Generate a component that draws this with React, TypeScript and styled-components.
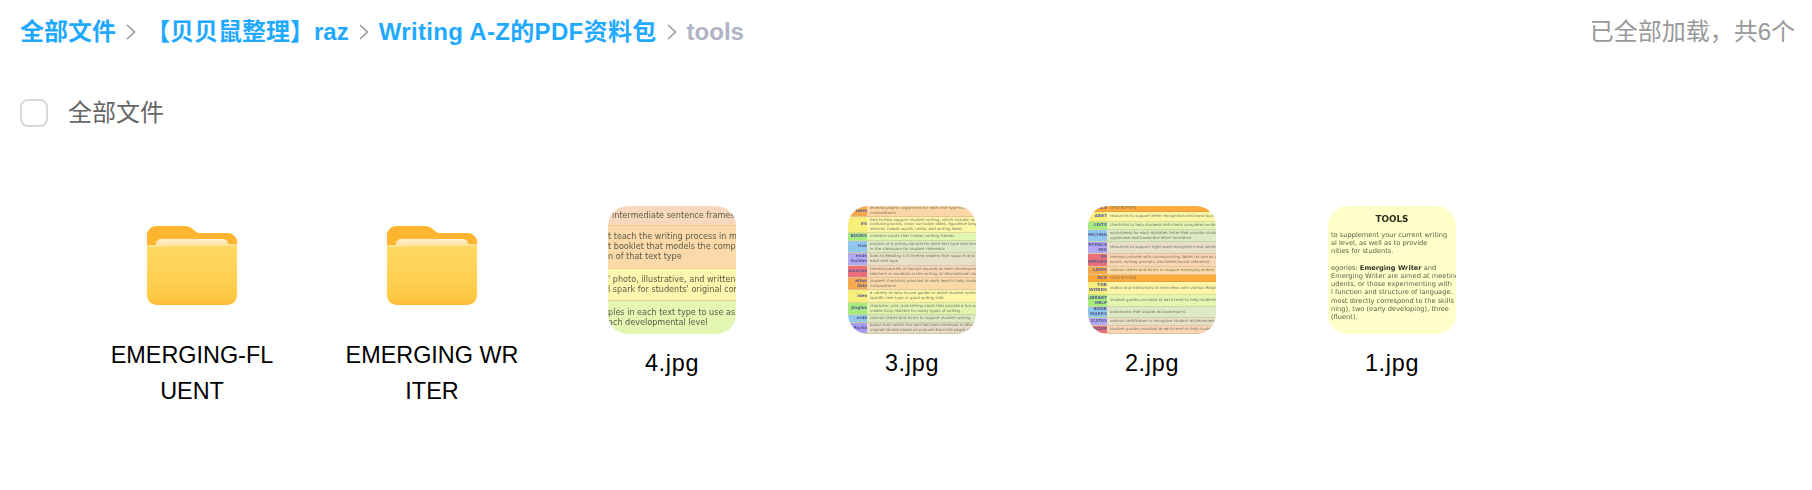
import styled, { createGlobalStyle } from "styled-components";

const cjk = `"Noto Sans CJK SC", "Noto Sans", sans-serif`;

const GlobalStyle = createGlobalStyle`
  body {
    margin: 0;
    background: #fff;
    font-family: "Liberation Sans", ${cjk};
  }
`;

type TableRow = {
  h: number;
  label: string;
  labelBg: string;
  bg: string;
  text: string[];
};

const table3: TableRow[] = [
  { h: 11, label: "izers", labelBg: "#f5a94e", bg: "#fcd6a6", text: ["leveled graphic organizers for each text type to help students plan", "compositions"] },
  { h: 16, label: "ES", labelBg: "#f6f07a", bg: "#fcf6a8", text: ["lists to help support student writing, which include: adjectives, adver", "confusing words, cross-curricular ideas, figurative language, glossary", "devices, transit words, verbs, and writing ideas"] },
  { h: 8, label: "BOOKS", labelBg: "#a6ec7c", bg: "#e2f5b2", text: ["Initiation books that contain writing frames"] },
  { h: 12, label: "tion", labelBg: "#8fc8ec", bg: "#dde8c6", text: ["posters of a writing sample for each text type and level to enlarge an", "in the classroom for student reference"] },
  { h: 13, label: "ends Guides", labelBg: "#b3a9f2", bg: "#e7dfc8", text: ["links to Reading A-Z leveled readers that support and provide example", "each text type"] },
  { h: 12, label: "sources", labelBg: "#ea6f78", bg: "#fad5b6", text: ["themed packets of sample sources at each developmental level for us", "teachers or students in the writing of informational reports"] },
  { h: 12, label: "ation lists", labelBg: "#f5a94e", bg: "#fcd9a8", text: ["student checklists provided at each level to help students revise their", "compositions"] },
  { h: 13, label: "ides", labelBg: "#f6f07a", bg: "#fcf6a8", text: ["a variety of easy-to-use guides to assist student writing according to", "specific text type or good writing trait"] },
  { h: 12, label: "Jingles", labelBg: "#a6ec7c", bg: "#e0f4b0", text: ["character, plot, and setting cards that provide a fun way for students", "create story starters for many types of writing"] },
  { h: 8, label: "ards", labelBg: "#8fc8ec", bg: "#dce8c4", text: ["various charts and forms to support student writing"] },
  { h: 11, label: "Packs", labelBg: "#a79df0", bg: "#e6dcc8", text: ["books from which the text has been removed to allow students to", "original stories based on pictures from the pages of an actual book"] },
];

const table2: TableRow[] = [
  { h: 6, label: "RCE", labelBg: "#ffa733", bg: "#ffab3c", text: ["DESCRIPTION"] },
  { h: 10, label: "ABET", labelBg: "#f6f07a", bg: "#fcf6a8", text: ["resources to support letter recognition and word building"] },
  { h: 8, label: "LISTS", labelBg: "#a6ec7c", bg: "#e2f5b2", text: ["checklists to help students self-check completed writing"] },
  { h: 12, label: "WRITING", labelBg: "#8fc8ec", bg: "#dde8c6", text: ["worksheets for each alphabet letter that provide students with practi", "uppercase and lowercase letter formation"] },
  { h: 12, label: "SENTENCE ING", labelBg: "#b3a9f2", bg: "#e7dfc8", text: ["resources to support sight word recognition and sentence building"] },
  { h: 13, label: "OF SUPPLIES", labelBg: "#ea6f78", bg: "#fad5b6", text: ["themed pictures with corresponding labels for use as writing practice", "words, writing prompts, and letter/sound reference"] },
  { h: 8, label: "LATES", labelBg: "#f5a94e", bg: "#fcd9a8", text: ["various charts and forms to support emerging writers"] },
  { h: 7, label: "RCE", labelBg: "#ffa733", bg: "#ffab3c", text: ["DESCRIPTION"] },
  { h: 13, label: "TOR WORDS", labelBg: "#f6f07a", bg: "#fcf6a8", text: ["videos and transcripts of interviews with various Reading A-Z authors"] },
  { h: 12, label: "LIBRARY HELP", labelBg: "#a6ec7c", bg: "#e2f5b2", text: ["student guides provided at each level to help students write a biograph"] },
  { h: 11, label: "BOOK MARKS", labelBg: "#8fc8ec", bg: "#dde8c6", text: ["bookmarks that double as bookreports"] },
  { h: 8, label: "ICATES", labelBg: "#b3a9f2", bg: "#e7dfc8", text: ["various certificates to recognize student achievement in writing"] },
  { h: 8, label: "GROUP", labelBg: "#ea6f78", bg: "#fad5b6", text: ["student guides provided at each level to help students self-edit their"] },
];

const bands = [
  { h: 20, bg: "#f8d8bc", inset: 4, lines: ["intermediate sentence frames"] },
  { h: 43, bg: "#fbd9a9", inset: -3, lines: ["t teach the writing process in more", "t booklet that models the composition", "n of that text type"] },
  { h: 32, bg: "#fcf7ae", inset: -1, lines: ["' photo, illustrative, and written prompts", "l spark for students' original compositions"] },
  { h: 33, bg: "#e3f6b2", inset: -3, lines: ["ples in each text type to use as", "ach developmental level"] },
];

const Page = styled.div`
  width: 1812px;
  height: 490px;
  overflow: hidden;
  background: #fff;
`;

const TopBar = styled.header`
  display: flex;
  justify-content: space-between;
  align-items: center;
  height: 34px;
  padding: 15px 17px 0 20px;
`;

const Crumbs = styled.nav`
  display: flex;
  align-items: center;
`;

const Crumb = styled.span`
  font-family: "Liberation Sans", ${cjk};
  font-size: 24px;
  font-weight: 700;
  line-height: 34px;
  white-space: nowrap;
  color: #1fa9ff;
`;

const WideCrumb = styled(Crumb)`
  letter-spacing: 0.33px;
`;

const CurrentCrumb = styled(Crumb)`
  color: #b1b4c4;
`;

const Chevron = styled.svg`
  flex: none;
  width: 12px;
  height: 18px;
  margin: 0 9px 0 9px;
`;

const LoadedNote = styled.span`
  font-family: "Liberation Sans", ${cjk};
  font-size: 24px;
  color: #999;
  line-height: 34px;
  white-space: nowrap;
`;

const SelectRow = styled.label`
  display: flex;
  align-items: center;
  gap: 20px;
  margin: 47px 0 0 20px;
  height: 30px;
`;

const CheckBox = styled.span`
  box-sizing: border-box;
  width: 28px;
  height: 28px;
  margin-top: 3px;
  border: 2px solid #d9d9d9;
  border-radius: 8px;
  background: #fff;
`;

const SelectLabel = styled.span`
  font-family: ${cjk};
  font-size: 24px;
  color: #666;
  line-height: 30px;
`;

const Grid = styled.main`
  display: grid;
  grid-template-columns: repeat(6, 240px);
  margin: 80px 0 0 72px;
`;

const Item = styled.div`
  display: flex;
  flex-direction: column;
  align-items: center;
`;

const Thumb = styled.div<{ $bg?: string }>`
  position: relative;
  width: 128px;
  height: 128px;
  border-radius: 20px;
  overflow: hidden;
  background: ${(p) => p.$bg || "#fff"};
  font-family: "DejaVu Sans", sans-serif;
  color: #5c5c48;
`;

const Soft = styled.div<{ $blur: number }>`
  filter: blur(${(p) => p.$blur}px);
`;

const FolderIcon = styled.svg`
  display: block;
  width: 128px;
  height: 128px;
`;

const Name = styled.div<{ $folder?: boolean }>`
  width: 176px;
  margin-top: ${(p) => (p.$folder ? "3px" : "11px")};
  font-size: 23.4px;
  letter-spacing: ${(p) => (p.$folder ? "0" : "0.7px")};
  line-height: 36px;
  color: #000;
  text-align: center;
  word-break: break-all;
`;

const Band = styled.div<{ $h: number; $bg: string; $inset: number }>`
  box-sizing: border-box;
  display: flex;
  flex-direction: column;
  justify-content: center;
  height: ${(p) => p.$h}px;
  padding-left: ${(p) => p.$inset}px;
  background: ${(p) => p.$bg};
  border-bottom: 1px solid #f0cf86;
  font-size: 8.1px;
  line-height: 9.7px;
  white-space: nowrap;
  overflow: hidden;

  &:last-child {
    border-bottom: none;
  }
`;

const Row = styled.div<{ $h: number; $bg: string }>`
  box-sizing: border-box;
  display: flex;
  height: ${(p) => p.$h}px;
  background: ${(p) => p.$bg};
  border-bottom: 1px solid rgba(170, 150, 90, 0.3);
  overflow: hidden;
`;

const RowLabel = styled.div<{ $bg: string }>`
  flex: none;
  display: flex;
  align-items: center;
  justify-content: flex-end;
  width: 19px;
  background: ${(p) => p.$bg};
  font-size: 4.2px;
  line-height: 4.6px;
  font-weight: 700;
  color: #5a5a96;
  overflow: hidden;
  text-align: right;
`;

const RowText = styled.div`
  display: flex;
  flex-direction: column;
  justify-content: center;
  padding-left: 3px;
  font-size: 3.9px;
  line-height: 4.6px;
  white-space: nowrap;
  color: #77775f;
`;

const Notes = styled.div`
  padding-top: 8px;
  font-size: 6.65px;
  line-height: 8.15px;
  white-space: nowrap;
  color: #60604a;
`;

const NotesTitle = styled.div`
  margin-bottom: 7px;
  text-align: center;
  font-size: 8.8px;
  line-height: 10px;
  font-weight: 700;
  color: #2a2a1c;
`;

const NotesBlock = styled.div`
  margin-bottom: 8.5px;
  padding-left: 3px;
`;

const Strong = styled.b`
  color: #33332a;
`;

const ChevronMark = () => (
  <Chevron viewBox="0 0 12 18">
    <path d="M2 2l7.5 7L2 16" fill="none" stroke="#9a9a9a" strokeWidth="1.6" />
  </Chevron>
);

const Folder = ({ id }: { id: string }) => (
  <FolderIcon viewBox="0 0 128 128">
    <defs>
      <linearGradient id={`${id}-front`} x1="0" y1="0" x2="0" y2="1">
        <stop offset="0" stopColor="#ffd864" />
        <stop offset="0.6" stopColor="#ffd052" />
        <stop offset="0.92" stopColor="#ffc540" />
        <stop offset="1" stopColor="#ffba38" />
      </linearGradient>
      <linearGradient id={`${id}-paper`} x1="0" y1="0" x2="0" y2="1">
        <stop offset="0" stopColor="#fff2d4" />
        <stop offset="1" stopColor="#ffdf9a" />
      </linearGradient>
    </defs>
    <path
      d="M19 29a9 9 0 0 1 9-9h29c3 0 5 1 7 2.600l3 2.400c1.500 1.200 3 2 5 2h28a9 9 0 0 1 9 9v12H19z"
      fill="#ffb52f"
    />
    <path d="M28 40v-2a5 5 0 0 1 5-5h62a5 5 0 0 1 5 5v2z" fill={`url(#${id}-paper)`} />
    <path
      d="M19 39.500c30-1.500 60-1.500 90-1v51a9.500 9.500 0 0 1-9.500 9.500h-71A9.500 9.500 0 0 1 19 89.500z"
      fill={`url(#${id}-front)`}
    />
    <path d="M19 39.500c30-1.500 60-1.500 90-1v1.500c-30-.500-60-.500-90 1z" fill="#ffe9a6" />
  </FolderIcon>
);

const DataTable = ({ rows }: { rows: TableRow[] }) => (
  <Soft $blur={0.45}>
    {rows.map((row, i) => (
      <Row key={i} $h={row.h} $bg={row.bg}>
        <RowLabel $bg={row.labelBg}>{row.label}</RowLabel>
        <RowText>
          {row.text.map((line) => (
            <div key={line}>{line}</div>
          ))}
        </RowText>
      </Row>
    ))}
  </Soft>
);

export default function App() {
  return (
    <Page>
      <GlobalStyle />
      <TopBar>
        <Crumbs>
          <Crumb>全部文件</Crumb>
          <ChevronMark />
          <Crumb>【贝贝鼠整理】raz</Crumb>
          <ChevronMark />
          <WideCrumb>Writing A-Z的PDF资料包</WideCrumb>
          <ChevronMark />
          <CurrentCrumb>tools</CurrentCrumb>
        </Crumbs>
        <LoadedNote>已全部加载，共6个</LoadedNote>
      </TopBar>

      <SelectRow>
        <CheckBox />
        <SelectLabel>全部文件</SelectLabel>
      </SelectRow>

      <Grid>
        <Item>
          <Folder id="folder-a" />
          <Name $folder>EMERGING-FLUENT</Name>
        </Item>
        <Item>
          <Folder id="folder-b" />
          <Name $folder>EMERGING WRITER</Name>
        </Item>
        <Item>
          <Thumb>
            <Soft $blur={0.35}>
              {bands.map((band) => (
                <Band key={band.lines[0]} $h={band.h} $bg={band.bg} $inset={band.inset}>
                  {band.lines.map((line) => (
                    <div key={line}>{line}</div>
                  ))}
                </Band>
              ))}
            </Soft>
          </Thumb>
          <Name>4.jpg</Name>
        </Item>
        <Item>
          <Thumb>
            <DataTable rows={table3} />
          </Thumb>
          <Name>3.jpg</Name>
        </Item>
        <Item>
          <Thumb>
            <DataTable rows={table2} />
          </Thumb>
          <Name>2.jpg</Name>
        </Item>
        <Item>
          <Thumb $bg="#ffffc9">
            <Soft $blur={0.35}>
              <Notes>
                <NotesTitle>TOOLS</NotesTitle>
                <NotesBlock>
                  <div>to supplement your current writing</div>
                  <div>al level, as well as to provide</div>
                  <div>nities for students.</div>
                </NotesBlock>
                <NotesBlock>
                  <div>
                    egories: <Strong>Emerging Writer</Strong> and
                  </div>
                  <div>Emerging Writer are aimed at meeting</div>
                  <div>udents, or those experimenting with</div>
                  <div>l function and structure of language.</div>
                  <div> most directly correspond to the skills</div>
                  <div>ning), two (early developing), three</div>
                  <div> (fluent).</div>
                </NotesBlock>
              </Notes>
            </Soft>
          </Thumb>
          <Name>1.jpg</Name>
        </Item>
      </Grid>
    </Page>
  );
}
